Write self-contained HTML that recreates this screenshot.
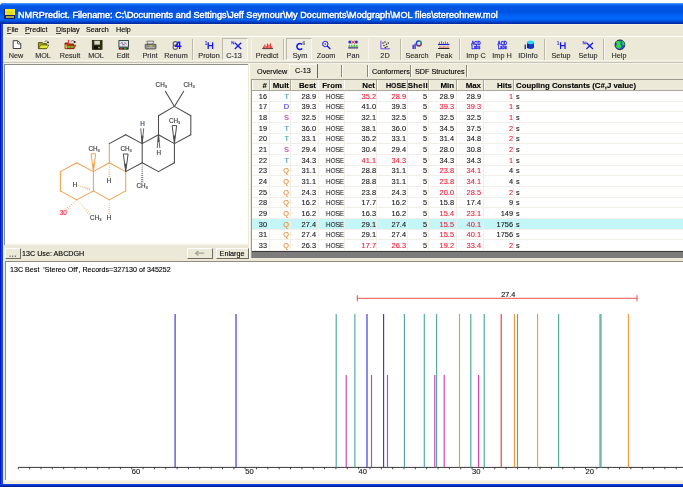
<!DOCTYPE html>
<html><head><meta charset="utf-8">
<style>
*{margin:0;padding:0;box-sizing:border-box}
html,body{width:683px;height:487px;overflow:hidden;background:#fff;font-family:"Liberation Sans",sans-serif}
.a{position:absolute}
.t{white-space:nowrap;line-height:1;will-change:transform;-webkit-text-stroke-width:0.12px}
svg{position:absolute;overflow:visible;will-change:transform}
u{text-decoration-thickness:0.6px;text-underline-offset:1px;text-decoration-color:#444}
</style></head><body>
<div class="a" style="left:0.00px;top:3.30px;width:700.00px;height:483.70px;background:#0B3FD6;border-top-left-radius:4px"></div>
<div class="a" style="left:0.00px;top:3.30px;width:700.00px;height:20.90px;border-top-left-radius:4px;background:linear-gradient(to bottom,#62AAFF 0px,#2A7BF8 1.0px,#0A60EC 2.2px,#0055E3 4px,#0053E0 9px,#005DEE 11.5px,#0067FA 14px,#0066F8 16px,#0052E0 18px,#0038B8 19.5px,#0026A0 20.9px)"></div>
<div class="a" style="left:0.00px;top:24.20px;width:2.80px;height:462.80px;background:linear-gradient(to right,#0010C4 0,#0414D0 0.9px,#1444E8 1.3px,#0A50E4 2.8px)"></div>
<div class="a" style="left:2.80px;top:24.20px;width:697.20px;height:460.00px;background:#ECE9D8"></div>
<div class="a" style="left:2.80px;top:24.20px;width:697.20px;height:0.80px;background:#F8F2E0"></div>
<div class="a" style="left:2.80px;top:24.20px;width:1.80px;height:460.00px;background:#F6EEDF"></div>
<div class="a" style="left:4.40px;top:9.20px;width:10.40px;height:10.10px;background:#14206A"></div>
<div class="a" style="left:4.50px;top:9.30px;width:10.20px;height:5.90px;background:#F2F020"></div>
<div class="a" style="left:6.00px;top:10.80px;width:7.20px;height:3.80px;background:#D8D030;opacity:.6"></div>
<div class="a" style="left:5.60px;top:16.00px;width:8.20px;height:2.40px;background:#D8D040;opacity:.75"></div>
<div class="a t" style="left:17.60px;top:11.21px;font-size:9.1px;color:#fff;-webkit-text-stroke-width:0.45px;letter-spacing:0.03px;text-shadow:0.7px 0.7px 0 #0A2A9A;">NMRPredict. Filename: C:\Documents and Settings\Jeff Seymour\My Documents\Modgraph\MOL files\stereohnew.mol</div>
<div class="a t" style="left:6.60px;top:26.23px;font-size:7.2px;color:#000;"><u>F</u>ile</div>
<div class="a t" style="left:25.40px;top:26.23px;font-size:7.2px;color:#000;"><u>P</u>redict</div>
<div class="a t" style="left:55.70px;top:26.23px;font-size:7.2px;color:#000;"><u>D</u>isplay</div>
<div class="a t" style="left:86.00px;top:26.23px;font-size:7.2px;color:#000;">Search</div>
<div class="a t" style="left:116.00px;top:26.23px;font-size:7.2px;color:#000;">Help</div>
<div class="a" style="left:2.80px;top:36.20px;width:697.20px;height:0.80px;background:#FFFFFF"></div>
<div class="a" style="left:2.80px;top:60.40px;width:697.20px;height:0.80px;background:#F5F3EA"></div>
<div class="a" style="left:2.80px;top:61.50px;width:697.20px;height:1.10px;background:#C9C5B5"></div>
<div class="a" style="left:2.80px;top:63.00px;width:697.20px;height:0.80px;background:#F4F2EA"></div>
<div class="a" style="left:192.00px;top:38.60px;width:0.80px;height:21.20px;background:#BDBAAB"></div>
<div class="a" style="left:192.80px;top:38.60px;width:0.60px;height:21.20px;background:#F6F5EE"></div>
<div class="a" style="left:250.60px;top:38.60px;width:0.80px;height:21.20px;background:#BDBAAB"></div>
<div class="a" style="left:251.40px;top:38.60px;width:0.60px;height:21.20px;background:#F6F5EE"></div>
<div class="a" style="left:283.30px;top:38.60px;width:0.80px;height:21.20px;background:#BDBAAB"></div>
<div class="a" style="left:284.10px;top:38.60px;width:0.60px;height:21.20px;background:#F6F5EE"></div>
<div class="a" style="left:367.50px;top:38.60px;width:0.80px;height:21.20px;background:#BDBAAB"></div>
<div class="a" style="left:368.30px;top:38.60px;width:0.60px;height:21.20px;background:#F6F5EE"></div>
<div class="a" style="left:400.40px;top:38.60px;width:0.80px;height:21.20px;background:#BDBAAB"></div>
<div class="a" style="left:401.20px;top:38.60px;width:0.60px;height:21.20px;background:#F6F5EE"></div>
<div class="a" style="left:459.40px;top:38.60px;width:0.80px;height:21.20px;background:#BDBAAB"></div>
<div class="a" style="left:460.20px;top:38.60px;width:0.60px;height:21.20px;background:#F6F5EE"></div>
<div class="a" style="left:544.20px;top:38.60px;width:0.80px;height:21.20px;background:#BDBAAB"></div>
<div class="a" style="left:545.00px;top:38.60px;width:0.60px;height:21.20px;background:#F6F5EE"></div>
<div class="a" style="left:603.40px;top:38.60px;width:0.80px;height:21.20px;background:#BDBAAB"></div>
<div class="a" style="left:604.20px;top:38.60px;width:0.60px;height:21.20px;background:#F6F5EE"></div>
<div class="a" style="left:222.30px;top:37.90px;width:25.80px;height:21.90px;background:#EFEDE2;border-left:1px solid #BDBAAA;border-top:1px solid #BDBAAA;border-right:0.8px solid #F8F7F2;border-bottom:0.8px solid #F8F7F2"></div>
<div class="a" style="left:286.30px;top:37.90px;width:25.50px;height:21.90px;background:#EFEDE2;border-left:1px solid #BDBAAA;border-top:1px solid #BDBAAA;border-right:0.8px solid #F8F7F2;border-bottom:0.8px solid #F8F7F2"></div>
<div class="a t" style="left:-3.65px;width:40px;text-align:center;top:52.21px;font-size:7.25px;color:#2a2a2a;">New</div>
<div class="a t" style="left:22.75px;width:40px;text-align:center;top:52.21px;font-size:7.25px;color:#2a2a2a;">MOL</div>
<div class="a t" style="left:50.05px;width:40px;text-align:center;top:52.21px;font-size:7.25px;color:#2a2a2a;">Result</div>
<div class="a t" style="left:76.00px;width:40px;text-align:center;top:52.21px;font-size:7.25px;color:#2a2a2a;">MOL</div>
<div class="a t" style="left:103.20px;width:40px;text-align:center;top:52.21px;font-size:7.25px;color:#2a2a2a;">Edit</div>
<div class="a t" style="left:130.25px;width:40px;text-align:center;top:52.21px;font-size:7.25px;color:#2a2a2a;">Print</div>
<div class="a t" style="left:156.10px;width:40px;text-align:center;top:52.21px;font-size:7.25px;color:#2a2a2a;">Renum</div>
<div class="a t" style="left:188.50px;width:40px;text-align:center;top:52.21px;font-size:7.25px;color:#2a2a2a;">Proton</div>
<div class="a t" style="left:213.95px;width:40px;text-align:center;top:52.21px;font-size:7.25px;color:#2a2a2a;">C-13</div>
<div class="a t" style="left:247.15px;width:40px;text-align:center;top:52.21px;font-size:7.25px;color:#2a2a2a;">Predict</div>
<div class="a t" style="left:280.10px;width:40px;text-align:center;top:52.21px;font-size:7.25px;color:#2a2a2a;">Sym</div>
<div class="a t" style="left:306.20px;width:40px;text-align:center;top:52.21px;font-size:7.25px;color:#2a2a2a;">Zoom</div>
<div class="a t" style="left:333.10px;width:40px;text-align:center;top:52.21px;font-size:7.25px;color:#2a2a2a;">Pan</div>
<div class="a t" style="left:364.85px;width:40px;text-align:center;top:52.21px;font-size:7.25px;color:#2a2a2a;">2D</div>
<div class="a t" style="left:396.50px;width:40px;text-align:center;top:52.21px;font-size:7.25px;color:#2a2a2a;">Search</div>
<div class="a t" style="left:423.50px;width:40px;text-align:center;top:52.21px;font-size:7.25px;color:#2a2a2a;">Peak</div>
<div class="a t" style="left:455.65px;width:40px;text-align:center;top:52.21px;font-size:7.25px;color:#2a2a2a;">Imp C</div>
<div class="a t" style="left:482.45px;width:40px;text-align:center;top:52.21px;font-size:7.25px;color:#2a2a2a;">Imp H</div>
<div class="a t" style="left:508.40px;width:40px;text-align:center;top:52.21px;font-size:7.25px;color:#2a2a2a;">IDInfo</div>
<div class="a t" style="left:540.90px;width:40px;text-align:center;top:52.21px;font-size:7.25px;color:#2a2a2a;">Setup</div>
<div class="a t" style="left:567.65px;width:40px;text-align:center;top:52.21px;font-size:7.25px;color:#2a2a2a;">Setup</div>
<div class="a t" style="left:599.25px;width:40px;text-align:center;top:52.21px;font-size:7.25px;color:#2a2a2a;">Help</div>
<svg width="683" height="70" viewBox="0 0 683 70" style="left:0;top:0">
<!-- New -->
<path d="M13.2 40.7 H17.8 L20.8 43.7 V48.5 H13.2 Z" fill="#fff" stroke="#2a2a2a" stroke-width="0.9"/>
<path d="M17.6 40.9 V43.9 H20.6" fill="none" stroke="#2a2a2a" stroke-width="0.7"/>
<!-- MOL open folder -->
<path d="M38.4 42.6 H42.5 L43.3 43.6 H46.5 V48.6 H38.4 Z" fill="#A8A818" stroke="#2a2a00" stroke-width="0.7"/>
<path d="M38.6 48.6 L40.6 45.0 H48.8 L46.6 48.6 Z" fill="#E8E840" stroke="#3a3a00" stroke-width="0.6"/>
<path d="M44.5 41.8 Q46 40 47.5 41.3" fill="none" stroke="#333" stroke-width="0.6"/>
<circle cx="48" cy="42.3" r="0.9" fill="#111"/>
<!-- Result folder -->
<path d="M65.0 43.0 H68.3 L69.1 43.9 H73.6 V48.6 H65.0 Z" fill="#D04010" stroke="#401000" stroke-width="0.7"/>
<path d="M65.2 48.6 L66.4 45.2 H75.8 L74.2 48.6 Z" fill="#F04818" stroke="#600" stroke-width="0.5"/>
<rect x="65.3" y="44.6" width="1.4" height="3.8" fill="#F0D030"/>
<circle cx="68.8" cy="46.9" r="1.2" fill="#30D840"/>
<circle cx="72.0" cy="46.9" r="1.2" fill="#30D840"/>
<path d="M68.4 39.8 V44.2" stroke="#F02020" stroke-width="1.0"/>
<path d="M70.8 41.6 Q72.4 39.9 74.0 41.0" fill="none" stroke="#333" stroke-width="0.6"/>
<circle cx="74.6" cy="41.9" r="1.0" fill="#111"/>
<!-- Save floppy -->
<rect x="92.2" y="40.3" width="9.9" height="9.2" fill="#303008" stroke="#151500" stroke-width="0.6"/>
<rect x="94.3" y="40.8" width="5.6" height="3.8" fill="#D8D8C8"/>
<rect x="94.0" y="45.8" width="6.2" height="3.4" fill="#101000"/>
<rect x="98.3" y="46.8" width="1.4" height="1.6" fill="#C8C8B8"/>
<!-- Edit monitor -->
<rect x="118.4" y="40.1" width="10.6" height="7.6" fill="#3A4A4A" rx="0.6"/>
<rect x="119.4" y="41.0" width="8.6" height="5.6" fill="#D8E8E8"/>
<path d="M120.5 43.5 L122.5 42.3 M124.5 42.0 L126.5 44.5 M122 45 L125 44" stroke="#D04080" stroke-width="0.8"/>
<path d="M121.5 42 L124 45.5" stroke="#30A0A0" stroke-width="0.8"/>
<rect x="118.8" y="47.7" width="9.8" height="1.9" fill="#202020"/>
<rect x="120.0" y="48.1" width="2.5" height="1.0" fill="#E03020"/>
<rect x="124.0" y="48.1" width="2.5" height="1.0" fill="#30B030"/>
<!-- Print -->
<path d="M146.8 41.2 H153.8 L152.8 44.0 H147.6 Z" fill="#E8E8E0" stroke="#505050" stroke-width="0.7"/>
<path d="M145.2 44.3 H156 V48.0 Q156 49 155 49 H146.2 Q145.2 49 145.2 48 Z" fill="#8A8A88" stroke="#404040" stroke-width="0.7"/>
<rect x="149.5" y="45.4" width="3" height="0.9" fill="#E0E020"/>
<rect x="146.5" y="47.3" width="8.2" height="0.8" fill="#C0C0C0"/>
<!-- Renum -->
<circle cx="175.3" cy="43.8" r="2.2" fill="none" stroke="#606060" stroke-width="1.1"/>
<circle cx="175.3" cy="47.2" r="2.2" fill="none" stroke="#606060" stroke-width="1.1"/>
<path d="M178.6 41.6 L175.8 46.3 H181.4 M179.6 41.6 V49" fill="none" stroke="#1A1AF0" stroke-width="1.5"/>
<!-- Proton 1H -->
<text x="204.8" y="44.6" font-size="4.6" font-weight="bold" fill="#1A1AE8" font-family="Liberation Sans">1</text>
<path d="M208.2 42.2 V49 M212.6 42.2 V49 M208.2 45.6 H212.6" stroke="#1A1AE8" stroke-width="1.3"/>
<!-- C13 NX -->
<path d="M231.8 44.3 V41.3 L233.8 44.3 V41.3" fill="none" stroke="#1A1AE8" stroke-width="0.7"/>
<path d="M234.8 42.8 L241.2 49 M241.2 42.8 L234.8 49" stroke="#1A1AE8" stroke-width="1.3"/>
<!-- Predict bars -->
<path d="M262.2 48.6 H273" stroke="#101010" stroke-width="0.8"/>
<path d="M263.4 48.3 V46.4 M264.8 48.3 V44.6 M266.2 48.3 V46.0 M267.6 48.3 V43.6 M269.0 48.3 V44.8 M270.4 48.3 V43.4 M271.8 48.3 V46.2" stroke="#E82020" stroke-width="1.0"/>
<!-- Sym C6 -->
<path d="M302.2 44.6 A3.0 3.0 0 1 0 302.2 48.4" fill="none" stroke="#1A1AE8" stroke-width="1.6"/>
<text x="302.6" y="45.2" font-size="4.8" font-weight="bold" fill="#505050" font-family="Liberation Sans">6</text>
<!-- Zoom -->
<circle cx="325.3" cy="44.0" r="2.7" fill="none" stroke="#1A1AE8" stroke-width="1.0"/>
<circle cx="325.3" cy="44.0" r="0.8" fill="#1A1AE8"/>
<path d="M327.2 45.9 L330.4 48.9" stroke="#1A1AE8" stroke-width="1.4"/>
<!-- Pan -->
<circle cx="349.8" cy="42.0" r="1.5" fill="#2030E0"/>
<circle cx="356.4" cy="42.0" r="1.5" fill="#2030E0"/>
<path d="M351.5 40.8 L354.8 43.6 M354.8 40.8 L351.5 43.6" stroke="#E02020" stroke-width="0.9"/>
<path d="M348.3 46.8 L349.3 44.3 L350.5 46.8 L351.8 44.5 L353 46.8 L354.3 44.3 L355.5 46.8 L356.8 44.5 L358 46.8 Z" fill="#30B830"/>
<rect x="348.1" y="47.4" width="10" height="1.0" fill="#101060"/>
<!-- 2D -->
<path d="M380.9 40.6 V48.8 H390" fill="none" stroke="#6A4AE8" stroke-width="1.0"/>
<g fill="#202020"><circle cx="383" cy="43" r="0.75"/><circle cx="385" cy="42" r="0.75"/><circle cx="386.5" cy="44.2" r="0.75"/><circle cx="384" cy="45.6" r="0.75"/><circle cx="387" cy="46.8" r="0.75"/><circle cx="385.3" cy="47.5" r="0.75"/><circle cx="388.3" cy="43" r="0.75"/></g>
<!-- Search -->
<rect x="412.5" y="44.8" width="1.3" height="4.2" fill="#2020D0"/>
<rect x="414.4" y="43.6" width="1.3" height="5.4" fill="#2020D0"/>
<circle cx="418.8" cy="43.4" r="2.4" fill="none" stroke="#2040E0" stroke-width="1.4"/>
<path d="M419.5 41.1 A2.4 2.4 0 0 1 421.2 43.3" fill="none" stroke="#20C040" stroke-width="1.4"/>
<path d="M420.8 44.6 A2.4 2.4 0 0 1 418.4 45.8" fill="none" stroke="#E02020" stroke-width="1.4"/>
<!-- Peak -->
<path d="M439.5 43.8 V41.8 M441.5 43.8 V41.2 M443.5 43.8 V42 M445.5 43.8 V41.5 M447.5 43.8 V42.2" stroke="#E02020" stroke-width="0.8"/>
<rect x="438" y="43.9" width="11.4" height="1.2" fill="#2020D0"/>
<path d="M440 48 V46.2 M442 48 V46.6 M444 48 V46 M446 48 V46.6 M448 48 V46.3" stroke="#E02020" stroke-width="0.8"/>
<rect x="438" y="48.1" width="11.4" height="0.9" fill="#101010"/>
<!-- Imp C / Imp H ACD Labs -->
<text x="471.2" y="44.6" font-size="4.6" font-weight="bold" fill="#2020F0" stroke="#2020F0" stroke-width="0.3" font-family="Liberation Sans" textLength="9.4" lengthAdjust="spacingAndGlyphs">ACD</text>
<text x="471.6" y="48.8" font-size="4.6" font-weight="bold" fill="#2020F0" stroke="#2020F0" stroke-width="0.3" font-family="Liberation Sans" textLength="8.8" lengthAdjust="spacingAndGlyphs">Labs</text>
<text x="497.6" y="44.6" font-size="4.6" font-weight="bold" fill="#2020F0" stroke="#2020F0" stroke-width="0.3" font-family="Liberation Sans" textLength="9.4" lengthAdjust="spacingAndGlyphs">ACD</text>
<text x="498.0" y="48.8" font-size="4.6" font-weight="bold" fill="#2020F0" stroke="#2020F0" stroke-width="0.3" font-family="Liberation Sans" textLength="8.8" lengthAdjust="spacingAndGlyphs">Labs</text>
<!-- IDInfo cylinder -->
<rect x="524.6" y="44.6" width="1.3" height="4.6" fill="#1A2A90"/>
<path d="M527 42.3 V48.0 Q530.5 50 534 48 V42.3 Z" fill="#1838C8"/>
<ellipse cx="530.5" cy="42.3" rx="3.5" ry="1.9" fill="#30D8F8"/>
<rect x="527.4" y="44" width="1.2" height="4" fill="#0A1A80"/>
<!-- Setup 1H -->
<text x="556.8" y="44.6" font-size="4.6" font-weight="bold" fill="#1A1AE8" font-family="Liberation Sans">1</text>
<path d="M560.6 42.2 V49 M565 42.2 V49 M560.6 45.6 H565" stroke="#1A1AE8" stroke-width="1.3"/>
<!-- Setup NX -->
<path d="M583.2 44.3 V41.3 L585.2 44.3 V41.3" fill="none" stroke="#1A1AE8" stroke-width="0.7"/>
<path d="M586.4 42.8 L593 49 M593 42.8 L586.4 49" stroke="#1A1AE8" stroke-width="1.3"/>
<!-- Help globe -->
<circle cx="619.9" cy="44.8" r="4.9" fill="#2850F0" stroke="#101010" stroke-width="0.8"/>
<path d="M615.6 41.8 Q618.5 40.2 621 41.6 L620 44 L621.6 45.6 L620 48.8 Q616.5 48.6 615.6 46.2 L617.2 44.5 Z" fill="#30E030"/>
<path d="M622 40.6 Q624.6 42 624.8 45.2 L622.6 45 Z" fill="#30E030"/>
</svg>
<div class="a" style="left:3.70px;top:64.20px;width:244.30px;height:180.80px;background:linear-gradient(to bottom,#fff 0,#fff 177.3px,#F6F4EC 179.8px,#ECE9D8 180.8px);border-left:1px solid #8E8C80;border-top:1px solid #8E8C80"></div>
<svg width="683" height="487" viewBox="0 0 683 487" style="left:0;top:0">
<path d="M76.70 162.70 L60.40 171.60" stroke="#F0A050" stroke-width="1.05" stroke-linecap="round"/>
<path d="M60.40 171.60 L60.40 190.90" stroke="#F0A050" stroke-width="1.05" stroke-linecap="round"/>
<path d="M60.40 190.90 L76.70 199.90" stroke="#F0A050" stroke-width="1.05" stroke-linecap="round"/>
<path d="M76.70 199.90 L93.40 190.90" stroke="#F0A050" stroke-width="1.05" stroke-linecap="round"/>
<path d="M93.40 190.90 L93.40 171.60" stroke="#F0A050" stroke-width="1.05" stroke-linecap="round"/>
<path d="M93.40 171.60 L76.70 162.70" stroke="#F0A050" stroke-width="1.05" stroke-linecap="round"/>
<path d="M93.40 171.60 L109.30 162.70" stroke="#F0A050" stroke-width="1.05" stroke-linecap="round"/>
<path d="M109.30 162.70 L125.70 171.60" stroke="#F0A050" stroke-width="1.05" stroke-linecap="round"/>
<path d="M125.70 171.60 L125.70 190.90" stroke="#F0A050" stroke-width="1.05" stroke-linecap="round"/>
<path d="M125.70 190.90 L109.30 199.90" stroke="#F0A050" stroke-width="1.05" stroke-linecap="round"/>
<path d="M109.30 199.90 L93.40 190.90" stroke="#F0A050" stroke-width="1.05" stroke-linecap="round"/>
<path d="M109.30 162.70 L109.30 143.60" stroke="#F0A050" stroke-width="1.05" stroke-linecap="round"/>
<path d="M109.30 143.60 L125.70 134.80" stroke="#4A4A4A" stroke-width="1.05" stroke-linecap="round"/>
<path d="M125.70 134.80 L142.20 143.60" stroke="#4A4A4A" stroke-width="1.05" stroke-linecap="round"/>
<path d="M142.20 143.60 L142.20 162.70" stroke="#4A4A4A" stroke-width="1.05" stroke-linecap="round"/>
<path d="M142.20 162.70 L125.70 171.60" stroke="#4A4A4A" stroke-width="1.05" stroke-linecap="round"/>
<path d="M142.20 143.60 L158.50 134.80" stroke="#4A4A4A" stroke-width="1.05" stroke-linecap="round"/>
<path d="M158.50 134.80 L174.40 143.60" stroke="#4A4A4A" stroke-width="1.05" stroke-linecap="round"/>
<path d="M174.40 143.60 L174.40 162.70" stroke="#4A4A4A" stroke-width="1.05" stroke-linecap="round"/>
<path d="M174.40 162.70 L158.50 171.60" stroke="#4A4A4A" stroke-width="1.05" stroke-linecap="round"/>
<path d="M158.50 171.60 L142.20 162.70" stroke="#4A4A4A" stroke-width="1.05" stroke-linecap="round"/>
<path d="M158.50 134.80 L158.50 115.80" stroke="#4A4A4A" stroke-width="1.05" stroke-linecap="round"/>
<path d="M158.50 115.80 L174.40 106.40" stroke="#4A4A4A" stroke-width="1.05" stroke-linecap="round"/>
<path d="M174.40 106.40 L190.80 115.80" stroke="#4A4A4A" stroke-width="1.05" stroke-linecap="round"/>
<path d="M190.80 115.80 L190.80 134.80" stroke="#4A4A4A" stroke-width="1.05" stroke-linecap="round"/>
<path d="M190.80 134.80 L174.40 143.60" stroke="#4A4A4A" stroke-width="1.05" stroke-linecap="round"/>
<path d="M174.40 106.40 L165.40 91.20" stroke="#4A4A4A" stroke-width="1.05" stroke-linecap="round"/>
<path d="M174.40 106.40 L183.70 91.20" stroke="#4A4A4A" stroke-width="1.05" stroke-linecap="round"/>
<path d="M93.40 171.60 L91.10 153.80 L95.70 153.80 Z" fill="#fff" stroke="#F0A050" stroke-width="1.0" stroke-linejoin="round"/>
<path d="M93.40 171.60 L92.37 163.59 L94.44 163.59 Z" fill="#F0A050"/>
<path d="M125.70 171.60 L123.30 154.00 L128.10 154.00 Z" fill="#fff" stroke="#4A4A4A" stroke-width="1.0" stroke-linejoin="round"/>
<path d="M125.70 171.60 L124.62 163.68 L126.78 163.68 Z" fill="#4A4A4A"/>
<path d="M174.40 143.60 L172.15 125.60 L176.65 125.60 Z" fill="#fff" stroke="#4A4A4A" stroke-width="1.0" stroke-linejoin="round"/>
<path d="M174.40 143.60 L173.39 135.50 L175.41 135.50 Z" fill="#4A4A4A"/>
<path d="M142.20 143.60 L140.70 128.30 M142.20 143.60 L143.70 128.30" fill="none" stroke="#4A4A4A" stroke-width="0.85"/>
<path d="M142.20 143.60 L141.45 135.95 L142.95 135.95 Z" fill="#4A4A4A" stroke="#4A4A4A" stroke-width="0.6"/>
<path d="M158.50 134.80 L157.20 148.00 M158.50 134.80 L159.80 148.00" fill="none" stroke="#4A4A4A" stroke-width="0.85"/>
<path d="M158.50 134.80 L157.85 141.40 L159.15 141.40 Z" fill="#4A4A4A" stroke="#4A4A4A" stroke-width="0.6"/>
<path d="M141.75 165.00 H142.65 M141.66 167.09 H142.74 M141.56 169.18 H142.84 M141.47 171.26 H142.93 M141.38 173.35 H143.02 M141.28 175.44 H143.12 M141.19 177.52 H143.21 M141.09 179.61 H143.31 M141.00 181.70 H143.40 " stroke="#4A4A4A" stroke-width="0.75"/>
<path d="M108.90 165.50 H109.70 M108.78 167.72 H109.82 M108.66 169.94 H109.94 M108.54 172.16 H110.06 M108.42 174.38 H110.18 M108.30 176.60 H110.30 " stroke="#F0A050" stroke-width="0.75"/>
<path d="M108.90 203.50 H109.70 M108.78 205.50 H109.82 M108.66 207.50 H109.94 M108.54 209.50 H110.06 M108.42 211.50 H110.18 M108.30 213.50 H110.30 " stroke="#F0A050" stroke-width="0.75"/>
<path d="M89.22 190.44 L89.98 187.96 M87.40 189.73 L88.07 187.53 M85.58 189.02 L86.16 187.11 M83.75 188.31 L84.25 186.69 M81.93 187.60 L82.34 186.26 M80.11 186.89 L80.43 185.84 M78.28 186.18 L78.52 185.42 " stroke="#F0A050" stroke-width="0.75"/>
<path d="M78.89 201.53 L78.31 202.07 M80.56 203.16 L79.78 203.87 M82.23 204.78 L81.26 205.67 M83.89 206.41 L82.74 207.47 M85.56 208.04 L84.21 209.27 M87.23 209.67 L85.69 211.08 M88.89 211.29 L87.17 212.88 M90.56 212.92 L88.64 214.68 " stroke="#F0A050" stroke-width="0.75"/>
<path d="M75.47 201.70 L74.93 201.10 M73.80 203.48 L73.00 202.60 M72.14 205.27 L71.06 204.09 M70.47 207.06 L69.13 205.58 M68.81 208.85 L67.19 207.07 M67.14 210.63 L65.26 208.57 " stroke="#F0A050" stroke-width="0.85"/>
<text x="155.60" y="87.00" font-size="6.3" fill="#3A3A3A" stroke="#3A3A3A" stroke-width="0.15" font-family="Liberation Sans">CH<tspan font-size="4.0" dy="1.1">3</tspan></text>
<text x="183.40" y="87.00" font-size="6.3" fill="#3A3A3A" stroke="#3A3A3A" stroke-width="0.15" font-family="Liberation Sans">CH<tspan font-size="4.0" dy="1.1">3</tspan></text>
<text x="169.00" y="122.80" font-size="6.3" fill="#3A3A3A" stroke="#3A3A3A" stroke-width="0.15" font-family="Liberation Sans">CH<tspan font-size="4.0" dy="1.1">3</tspan></text>
<text x="120.40" y="151.20" font-size="6.3" fill="#3A3A3A" stroke="#3A3A3A" stroke-width="0.15" font-family="Liberation Sans">CH<tspan font-size="4.0" dy="1.1">3</tspan></text>
<text x="88.40" y="151.20" font-size="6.3" fill="#3A3A3A" stroke="#3A3A3A" stroke-width="0.15" font-family="Liberation Sans">CH<tspan font-size="4.0" dy="1.1">3</tspan></text>
<text x="136.50" y="188.00" font-size="6.3" fill="#3A3A3A" stroke="#3A3A3A" stroke-width="0.15" font-family="Liberation Sans">CH<tspan font-size="4.0" dy="1.1">3</tspan></text>
<text x="90.10" y="220.20" font-size="6.3" fill="#3A3A3A" stroke="#3A3A3A" stroke-width="0.15" font-family="Liberation Sans">CH<tspan font-size="4.0" dy="1.1">3</tspan></text>
<text x="140.20" y="126.10" font-size="6.3" fill="#3A4A6A" stroke="#3A4A6A" stroke-width="0.18" font-family="Liberation Sans">H</text>
<text x="156.60" y="154.80" font-size="6.3" fill="#3A3A3A" stroke="#3A3A3A" stroke-width="0.18" font-family="Liberation Sans">H</text>
<text x="106.80" y="183.00" font-size="6.3" fill="#3A3A3A" stroke="#3A3A3A" stroke-width="0.18" font-family="Liberation Sans">H</text>
<text x="72.80" y="187.00" font-size="6.3" fill="#3A3A3A" stroke="#3A3A3A" stroke-width="0.18" font-family="Liberation Sans">H</text>
<text x="106.80" y="220.40" font-size="6.3" fill="#3A3A3A" stroke="#3A3A3A" stroke-width="0.18" font-family="Liberation Sans">H</text>
<text x="59.80" y="215.40" font-size="6.4" fill="#F03048" stroke="#F03048" stroke-width="0.18" font-family="Liberation Sans">30</text>
</svg>
<div class="a" style="left:5.00px;top:248.30px;width:15.70px;height:10.40px;background:#ECE9D8;border-left:0.8px solid #fff;border-top:0.8px solid #fff;border-right:1px solid #6E6C60;border-bottom:1px solid #6E6C60"></div>
<svg width="683" height="487" viewBox="0 0 683 487" style="left:0;top:0"><path d="M9.6 256.2 h1 M12.2 256.2 h1 M14.8 256.2 h1" stroke="#202020" stroke-width="1"/></svg>
<div class="a t" style="left:22.00px;top:250.33px;font-size:7.2px;color:#000;">13C Use: ABCDGH</div>
<div class="a" style="left:187.30px;top:247.80px;width:25.40px;height:10.80px;background:#ECE9D8;border-left:0.8px solid #fff;border-top:0.8px solid #fff;border-right:1px solid #6E6C60;border-bottom:1px solid #6E6C60"></div>
<div class="a" style="left:215.90px;top:247.80px;width:33.00px;height:10.80px;background:#ECE9D8;border-left:0.8px solid #fff;border-top:0.8px solid #fff;border-right:1px solid #6E6C60;border-bottom:1px solid #6E6C60"></div>
<svg width="683" height="487" viewBox="0 0 683 487" style="left:0;top:0"><path d="M195.6 253.2 H204.2 M198.4 250.9 L195.6 253.2 L198.4 255.5" fill="none" stroke="#A6A496" stroke-width="1.3"/></svg>
<div class="a t" style="left:212.40px;width:40px;text-align:center;top:249.93px;font-size:7.2px;color:#000;">Enlarge</div>
<div class="a" style="left:248.60px;top:63.80px;width:451.40px;height:15.40px;background:#ECE9D8"></div>
<div class="a" style="left:248.60px;top:63.50px;width:0.80px;height:195.00px;background:#FFFFFF"></div>
<div class="a" style="left:289.00px;top:63.60px;width:28.60px;height:14.90px;background:#EEEBDD;border-left:0.6px solid #F8F6F0;border-top:0.6px solid #F8F6F0"></div>
<div class="a" style="left:317.00px;top:63.50px;width:0.90px;height:14.00px;background:#6A685C"></div>
<div class="a" style="left:341.40px;top:64.50px;width:0.90px;height:12.50px;background:#8A887C"></div>
<div class="a" style="left:342.30px;top:64.50px;width:0.60px;height:12.50px;background:#FFFFFF"></div>
<div class="a" style="left:366.60px;top:64.50px;width:0.90px;height:12.50px;background:#8A887C"></div>
<div class="a" style="left:367.50px;top:64.50px;width:0.60px;height:12.50px;background:#FFFFFF"></div>
<div class="a" style="left:409.60px;top:64.50px;width:0.90px;height:12.50px;background:#8A887C"></div>
<div class="a" style="left:410.50px;top:64.50px;width:0.60px;height:12.50px;background:#FFFFFF"></div>
<div class="a" style="left:466.40px;top:64.50px;width:0.90px;height:12.50px;background:#8A887C"></div>
<div class="a" style="left:467.30px;top:64.50px;width:0.60px;height:12.50px;background:#FFFFFF"></div>
<div class="a t" style="left:256.70px;top:68.11px;font-size:7.25px;color:#000;">Overview</div>
<div class="a t" style="left:294.70px;top:67.01px;font-size:7.25px;color:#000;">C-13</div>
<div class="a t" style="left:371.80px;top:68.11px;font-size:7.25px;color:#000;">Conformers</div>
<div class="a t" style="left:415.40px;top:68.11px;font-size:7.25px;color:#000;">SDF Structures</div>
<div class="a" style="left:251.70px;top:79.60px;width:448.30px;height:171.40px;background:#fff"></div>
<div class="a" style="left:250.90px;top:79.10px;width:0.90px;height:178.90px;background:#9C9A8E"></div>
<div class="a" style="left:250.90px;top:79.00px;width:449.10px;height:0.80px;background:#9C9A8E"></div>
<div class="a" style="left:251.70px;top:79.60px;width:448.30px;height:11.10px;background:#ECE9D8"></div>
<div class="a" style="left:268.70px;top:79.60px;width:0.90px;height:11.10px;background:#A9A698"></div>
<div class="a" style="left:251.80px;top:79.60px;width:0.70px;height:11.10px;background:#FFFFFF"></div>
<div class="a" style="left:290.20px;top:79.60px;width:0.90px;height:11.10px;background:#A9A698"></div>
<div class="a" style="left:269.60px;top:79.60px;width:0.70px;height:11.10px;background:#FFFFFF"></div>
<div class="a" style="left:317.50px;top:79.60px;width:0.90px;height:11.10px;background:#A9A698"></div>
<div class="a" style="left:291.10px;top:79.60px;width:0.70px;height:11.10px;background:#FFFFFF"></div>
<div class="a" style="left:343.50px;top:79.60px;width:0.90px;height:11.10px;background:#A9A698"></div>
<div class="a" style="left:318.40px;top:79.60px;width:0.70px;height:11.10px;background:#FFFFFF"></div>
<div class="a" style="left:376.20px;top:79.60px;width:0.90px;height:11.10px;background:#A9A698"></div>
<div class="a" style="left:344.40px;top:79.60px;width:0.70px;height:11.10px;background:#FFFFFF"></div>
<div class="a" style="left:406.70px;top:79.60px;width:0.90px;height:11.10px;background:#A9A698"></div>
<div class="a" style="left:377.10px;top:79.60px;width:0.70px;height:11.10px;background:#FFFFFF"></div>
<div class="a" style="left:428.20px;top:79.60px;width:0.90px;height:11.10px;background:#A9A698"></div>
<div class="a" style="left:407.60px;top:79.60px;width:0.70px;height:11.10px;background:#FFFFFF"></div>
<div class="a" style="left:455.90px;top:79.60px;width:0.90px;height:11.10px;background:#A9A698"></div>
<div class="a" style="left:429.10px;top:79.60px;width:0.70px;height:11.10px;background:#FFFFFF"></div>
<div class="a" style="left:482.80px;top:79.60px;width:0.90px;height:11.10px;background:#A9A698"></div>
<div class="a" style="left:456.80px;top:79.60px;width:0.70px;height:11.10px;background:#FFFFFF"></div>
<div class="a" style="left:513.30px;top:79.60px;width:0.90px;height:11.10px;background:#A9A698"></div>
<div class="a" style="left:483.70px;top:79.60px;width:0.70px;height:11.10px;background:#FFFFFF"></div>
<div class="a" style="left:699.20px;top:79.60px;width:0.90px;height:11.10px;background:#A9A698"></div>
<div class="a" style="left:514.20px;top:79.60px;width:0.70px;height:11.10px;background:#FFFFFF"></div>
<div class="a" style="left:251.70px;top:89.90px;width:448.30px;height:0.90px;background:#A9A698"></div>
<div class="a t" style="left:227.20px;width:40px;text-align:right;top:82.19px;font-size:7.9px;color:#000;font-weight:bold;">#</div>
<div class="a t" style="left:248.70px;width:40px;text-align:right;top:82.19px;font-size:7.9px;color:#000;font-weight:bold;">Mult</div>
<div class="a t" style="left:276.00px;width:40px;text-align:right;top:82.19px;font-size:7.9px;color:#000;font-weight:bold;">Best</div>
<div class="a t" style="left:302.00px;width:40px;text-align:right;top:82.19px;font-size:7.9px;color:#000;font-weight:bold;">From</div>
<div class="a t" style="left:334.70px;width:40px;text-align:right;top:82.19px;font-size:7.9px;color:#000;font-weight:bold;">Net</div>
<div class="a t" style="left:366.10px;width:40px;text-align:right;top:82.19px;font-size:7.9px;color:#000;font-weight:bold;transform:scaleX(0.9);transform-origin:100% 50%;">HOSE</div>
<div class="a t" style="left:388.40px;width:40px;text-align:right;top:82.19px;font-size:7.9px;color:#000;font-weight:bold;letter-spacing:0.3px;">Shell</div>
<div class="a t" style="left:414.40px;width:40px;text-align:right;top:82.19px;font-size:7.9px;color:#000;font-weight:bold;">Min</div>
<div class="a t" style="left:441.30px;width:40px;text-align:right;top:82.19px;font-size:7.9px;color:#000;font-weight:bold;">Max</div>
<div class="a t" style="left:471.80px;width:40px;text-align:right;top:82.19px;font-size:7.9px;color:#000;font-weight:bold;">Hits</div>
<div class="a t" style="left:516.40px;top:82.24px;font-size:7.8px;color:#000;font-weight:bold;">Coupling Constants (C#,J value)</div>
<div class="a" style="left:251.70px;top:100.57px;width:448.30px;height:0.80px;background:#F1EFE7"></div>
<div class="a t" style="left:227.20px;width:40px;text-align:right;top:92.67px;font-size:7.4px;color:#1A1A1A;">16</div>
<div class="a t" style="left:248.70px;width:40px;text-align:right;top:92.67px;font-size:7.4px;color:#3A9E9C;">T</div>
<div class="a t" style="left:276.00px;width:40px;text-align:right;top:92.67px;font-size:7.4px;color:#1A1A1A;">28.9</div>
<div class="a t" style="left:303.50px;width:40px;text-align:right;top:92.67px;font-size:7.4px;color:#1A1A1A;transform:scaleX(0.87);transform-origin:100% 50%;">HOSE</div>
<div class="a t" style="left:335.60px;width:40px;text-align:right;top:92.67px;font-size:7.4px;color:#F0203A;">35.2</div>
<div class="a t" style="left:366.20px;width:40px;text-align:right;top:92.67px;font-size:7.4px;color:#F0203A;">28.9</div>
<div class="a t" style="left:386.70px;width:40px;text-align:right;top:92.67px;font-size:7.4px;color:#1A1A1A;">5</div>
<div class="a t" style="left:414.40px;width:40px;text-align:right;top:92.67px;font-size:7.4px;color:#1A1A1A;">28.9</div>
<div class="a t" style="left:441.30px;width:40px;text-align:right;top:92.67px;font-size:7.4px;color:#1A1A1A;">28.9</div>
<div class="a t" style="left:472.80px;width:40px;text-align:right;top:92.67px;font-size:7.4px;color:#F0203A;">1</div>
<div class="a t" style="left:516.40px;top:92.74px;font-size:7.25px;color:#1A1A1A;">s</div>
<div class="a" style="left:251.70px;top:111.23px;width:448.30px;height:0.80px;background:#F1EFE7"></div>
<div class="a t" style="left:227.20px;width:40px;text-align:right;top:103.33px;font-size:7.4px;color:#1A1A1A;">17</div>
<div class="a t" style="left:248.70px;width:40px;text-align:right;top:103.33px;font-size:7.4px;color:#3A3AE0;">D</div>
<div class="a t" style="left:276.00px;width:40px;text-align:right;top:103.33px;font-size:7.4px;color:#1A1A1A;">39.3</div>
<div class="a t" style="left:303.50px;width:40px;text-align:right;top:103.33px;font-size:7.4px;color:#1A1A1A;transform:scaleX(0.87);transform-origin:100% 50%;">HOSE</div>
<div class="a t" style="left:335.60px;width:40px;text-align:right;top:103.33px;font-size:7.4px;color:#1A1A1A;">41.0</div>
<div class="a t" style="left:366.20px;width:40px;text-align:right;top:103.33px;font-size:7.4px;color:#1A1A1A;">39.3</div>
<div class="a t" style="left:386.70px;width:40px;text-align:right;top:103.33px;font-size:7.4px;color:#1A1A1A;">5</div>
<div class="a t" style="left:414.40px;width:40px;text-align:right;top:103.33px;font-size:7.4px;color:#F0203A;">39.3</div>
<div class="a t" style="left:441.30px;width:40px;text-align:right;top:103.33px;font-size:7.4px;color:#F0203A;">39.3</div>
<div class="a t" style="left:472.80px;width:40px;text-align:right;top:103.33px;font-size:7.4px;color:#F0203A;">1</div>
<div class="a t" style="left:516.40px;top:103.41px;font-size:7.25px;color:#1A1A1A;">s</div>
<div class="a" style="left:251.70px;top:121.90px;width:448.30px;height:0.80px;background:#F1EFE7"></div>
<div class="a t" style="left:227.20px;width:40px;text-align:right;top:114.00px;font-size:7.4px;color:#1A1A1A;">18</div>
<div class="a t" style="left:248.70px;width:40px;text-align:right;top:114.00px;font-size:7.4px;color:#C83A9E;">S</div>
<div class="a t" style="left:276.00px;width:40px;text-align:right;top:114.00px;font-size:7.4px;color:#1A1A1A;">32.5</div>
<div class="a t" style="left:303.50px;width:40px;text-align:right;top:114.00px;font-size:7.4px;color:#1A1A1A;transform:scaleX(0.87);transform-origin:100% 50%;">HOSE</div>
<div class="a t" style="left:335.60px;width:40px;text-align:right;top:114.00px;font-size:7.4px;color:#1A1A1A;">32.1</div>
<div class="a t" style="left:366.20px;width:40px;text-align:right;top:114.00px;font-size:7.4px;color:#1A1A1A;">32.5</div>
<div class="a t" style="left:386.70px;width:40px;text-align:right;top:114.00px;font-size:7.4px;color:#1A1A1A;">5</div>
<div class="a t" style="left:414.40px;width:40px;text-align:right;top:114.00px;font-size:7.4px;color:#1A1A1A;">32.5</div>
<div class="a t" style="left:441.30px;width:40px;text-align:right;top:114.00px;font-size:7.4px;color:#1A1A1A;">32.5</div>
<div class="a t" style="left:472.80px;width:40px;text-align:right;top:114.00px;font-size:7.4px;color:#F0203A;">1</div>
<div class="a t" style="left:516.40px;top:114.07px;font-size:7.25px;color:#1A1A1A;">s</div>
<div class="a" style="left:251.70px;top:132.57px;width:448.30px;height:0.80px;background:#F1EFE7"></div>
<div class="a t" style="left:227.20px;width:40px;text-align:right;top:124.67px;font-size:7.4px;color:#1A1A1A;">19</div>
<div class="a t" style="left:248.70px;width:40px;text-align:right;top:124.67px;font-size:7.4px;color:#3A9E9C;">T</div>
<div class="a t" style="left:276.00px;width:40px;text-align:right;top:124.67px;font-size:7.4px;color:#1A1A1A;">36.0</div>
<div class="a t" style="left:303.50px;width:40px;text-align:right;top:124.67px;font-size:7.4px;color:#1A1A1A;transform:scaleX(0.87);transform-origin:100% 50%;">HOSE</div>
<div class="a t" style="left:335.60px;width:40px;text-align:right;top:124.67px;font-size:7.4px;color:#1A1A1A;">38.1</div>
<div class="a t" style="left:366.20px;width:40px;text-align:right;top:124.67px;font-size:7.4px;color:#1A1A1A;">36.0</div>
<div class="a t" style="left:386.70px;width:40px;text-align:right;top:124.67px;font-size:7.4px;color:#1A1A1A;">5</div>
<div class="a t" style="left:414.40px;width:40px;text-align:right;top:124.67px;font-size:7.4px;color:#1A1A1A;">34.5</div>
<div class="a t" style="left:441.30px;width:40px;text-align:right;top:124.67px;font-size:7.4px;color:#1A1A1A;">37.5</div>
<div class="a t" style="left:472.80px;width:40px;text-align:right;top:124.67px;font-size:7.4px;color:#F0203A;">2</div>
<div class="a t" style="left:516.40px;top:124.74px;font-size:7.25px;color:#1A1A1A;">s</div>
<div class="a" style="left:251.70px;top:143.23px;width:448.30px;height:0.80px;background:#F1EFE7"></div>
<div class="a t" style="left:227.20px;width:40px;text-align:right;top:135.33px;font-size:7.4px;color:#1A1A1A;">20</div>
<div class="a t" style="left:248.70px;width:40px;text-align:right;top:135.33px;font-size:7.4px;color:#3A9E9C;">T</div>
<div class="a t" style="left:276.00px;width:40px;text-align:right;top:135.33px;font-size:7.4px;color:#1A1A1A;">33.1</div>
<div class="a t" style="left:303.50px;width:40px;text-align:right;top:135.33px;font-size:7.4px;color:#1A1A1A;transform:scaleX(0.87);transform-origin:100% 50%;">HOSE</div>
<div class="a t" style="left:335.60px;width:40px;text-align:right;top:135.33px;font-size:7.4px;color:#1A1A1A;">35.2</div>
<div class="a t" style="left:366.20px;width:40px;text-align:right;top:135.33px;font-size:7.4px;color:#1A1A1A;">33.1</div>
<div class="a t" style="left:386.70px;width:40px;text-align:right;top:135.33px;font-size:7.4px;color:#1A1A1A;">5</div>
<div class="a t" style="left:414.40px;width:40px;text-align:right;top:135.33px;font-size:7.4px;color:#1A1A1A;">31.4</div>
<div class="a t" style="left:441.30px;width:40px;text-align:right;top:135.33px;font-size:7.4px;color:#1A1A1A;">34.8</div>
<div class="a t" style="left:472.80px;width:40px;text-align:right;top:135.33px;font-size:7.4px;color:#F0203A;">2</div>
<div class="a t" style="left:516.40px;top:135.41px;font-size:7.25px;color:#1A1A1A;">s</div>
<div class="a" style="left:251.70px;top:153.90px;width:448.30px;height:0.80px;background:#F1EFE7"></div>
<div class="a t" style="left:227.20px;width:40px;text-align:right;top:146.00px;font-size:7.4px;color:#1A1A1A;">21</div>
<div class="a t" style="left:248.70px;width:40px;text-align:right;top:146.00px;font-size:7.4px;color:#C83A9E;">S</div>
<div class="a t" style="left:276.00px;width:40px;text-align:right;top:146.00px;font-size:7.4px;color:#1A1A1A;">29.4</div>
<div class="a t" style="left:303.50px;width:40px;text-align:right;top:146.00px;font-size:7.4px;color:#1A1A1A;transform:scaleX(0.87);transform-origin:100% 50%;">HOSE</div>
<div class="a t" style="left:335.60px;width:40px;text-align:right;top:146.00px;font-size:7.4px;color:#1A1A1A;">30.4</div>
<div class="a t" style="left:366.20px;width:40px;text-align:right;top:146.00px;font-size:7.4px;color:#1A1A1A;">29.4</div>
<div class="a t" style="left:386.70px;width:40px;text-align:right;top:146.00px;font-size:7.4px;color:#1A1A1A;">5</div>
<div class="a t" style="left:414.40px;width:40px;text-align:right;top:146.00px;font-size:7.4px;color:#1A1A1A;">28.0</div>
<div class="a t" style="left:441.30px;width:40px;text-align:right;top:146.00px;font-size:7.4px;color:#1A1A1A;">30.8</div>
<div class="a t" style="left:472.80px;width:40px;text-align:right;top:146.00px;font-size:7.4px;color:#F0203A;">2</div>
<div class="a t" style="left:516.40px;top:146.07px;font-size:7.25px;color:#1A1A1A;">s</div>
<div class="a" style="left:251.70px;top:164.57px;width:448.30px;height:0.80px;background:#F1EFE7"></div>
<div class="a t" style="left:227.20px;width:40px;text-align:right;top:156.67px;font-size:7.4px;color:#1A1A1A;">22</div>
<div class="a t" style="left:248.70px;width:40px;text-align:right;top:156.67px;font-size:7.4px;color:#3A9E9C;">T</div>
<div class="a t" style="left:276.00px;width:40px;text-align:right;top:156.67px;font-size:7.4px;color:#1A1A1A;">34.3</div>
<div class="a t" style="left:303.50px;width:40px;text-align:right;top:156.67px;font-size:7.4px;color:#1A1A1A;transform:scaleX(0.87);transform-origin:100% 50%;">HOSE</div>
<div class="a t" style="left:335.60px;width:40px;text-align:right;top:156.67px;font-size:7.4px;color:#F0203A;">41.1</div>
<div class="a t" style="left:366.20px;width:40px;text-align:right;top:156.67px;font-size:7.4px;color:#F0203A;">34.3</div>
<div class="a t" style="left:386.70px;width:40px;text-align:right;top:156.67px;font-size:7.4px;color:#1A1A1A;">5</div>
<div class="a t" style="left:414.40px;width:40px;text-align:right;top:156.67px;font-size:7.4px;color:#1A1A1A;">34.3</div>
<div class="a t" style="left:441.30px;width:40px;text-align:right;top:156.67px;font-size:7.4px;color:#1A1A1A;">34.3</div>
<div class="a t" style="left:472.80px;width:40px;text-align:right;top:156.67px;font-size:7.4px;color:#F0203A;">1</div>
<div class="a t" style="left:516.40px;top:156.74px;font-size:7.25px;color:#1A1A1A;">s</div>
<div class="a" style="left:251.70px;top:175.24px;width:448.30px;height:0.80px;background:#F1EFE7"></div>
<div class="a t" style="left:227.20px;width:40px;text-align:right;top:167.34px;font-size:7.4px;color:#1A1A1A;">23</div>
<div class="a t" style="left:248.70px;width:40px;text-align:right;top:167.34px;font-size:7.4px;color:#F08A2A;">Q</div>
<div class="a t" style="left:276.00px;width:40px;text-align:right;top:167.34px;font-size:7.4px;color:#1A1A1A;">31.1</div>
<div class="a t" style="left:303.50px;width:40px;text-align:right;top:167.34px;font-size:7.4px;color:#1A1A1A;transform:scaleX(0.87);transform-origin:100% 50%;">HOSE</div>
<div class="a t" style="left:335.60px;width:40px;text-align:right;top:167.34px;font-size:7.4px;color:#1A1A1A;">28.8</div>
<div class="a t" style="left:366.20px;width:40px;text-align:right;top:167.34px;font-size:7.4px;color:#1A1A1A;">31.1</div>
<div class="a t" style="left:386.70px;width:40px;text-align:right;top:167.34px;font-size:7.4px;color:#1A1A1A;">5</div>
<div class="a t" style="left:414.40px;width:40px;text-align:right;top:167.34px;font-size:7.4px;color:#F0203A;">23.8</div>
<div class="a t" style="left:441.30px;width:40px;text-align:right;top:167.34px;font-size:7.4px;color:#F0203A;">34.1</div>
<div class="a t" style="left:472.80px;width:40px;text-align:right;top:167.34px;font-size:7.4px;color:#1A1A1A;">4</div>
<div class="a t" style="left:516.40px;top:167.41px;font-size:7.25px;color:#1A1A1A;">s</div>
<div class="a" style="left:251.70px;top:185.90px;width:448.30px;height:0.80px;background:#F1EFE7"></div>
<div class="a t" style="left:227.20px;width:40px;text-align:right;top:178.00px;font-size:7.4px;color:#1A1A1A;">24</div>
<div class="a t" style="left:248.70px;width:40px;text-align:right;top:178.00px;font-size:7.4px;color:#F08A2A;">Q</div>
<div class="a t" style="left:276.00px;width:40px;text-align:right;top:178.00px;font-size:7.4px;color:#1A1A1A;">31.1</div>
<div class="a t" style="left:303.50px;width:40px;text-align:right;top:178.00px;font-size:7.4px;color:#1A1A1A;transform:scaleX(0.87);transform-origin:100% 50%;">HOSE</div>
<div class="a t" style="left:335.60px;width:40px;text-align:right;top:178.00px;font-size:7.4px;color:#1A1A1A;">28.8</div>
<div class="a t" style="left:366.20px;width:40px;text-align:right;top:178.00px;font-size:7.4px;color:#1A1A1A;">31.1</div>
<div class="a t" style="left:386.70px;width:40px;text-align:right;top:178.00px;font-size:7.4px;color:#1A1A1A;">5</div>
<div class="a t" style="left:414.40px;width:40px;text-align:right;top:178.00px;font-size:7.4px;color:#F0203A;">23.8</div>
<div class="a t" style="left:441.30px;width:40px;text-align:right;top:178.00px;font-size:7.4px;color:#F0203A;">34.1</div>
<div class="a t" style="left:472.80px;width:40px;text-align:right;top:178.00px;font-size:7.4px;color:#1A1A1A;">4</div>
<div class="a t" style="left:516.40px;top:178.08px;font-size:7.25px;color:#1A1A1A;">s</div>
<div class="a" style="left:251.70px;top:196.57px;width:448.30px;height:0.80px;background:#F1EFE7"></div>
<div class="a t" style="left:227.20px;width:40px;text-align:right;top:188.67px;font-size:7.4px;color:#1A1A1A;">25</div>
<div class="a t" style="left:248.70px;width:40px;text-align:right;top:188.67px;font-size:7.4px;color:#F08A2A;">Q</div>
<div class="a t" style="left:276.00px;width:40px;text-align:right;top:188.67px;font-size:7.4px;color:#1A1A1A;">24.3</div>
<div class="a t" style="left:303.50px;width:40px;text-align:right;top:188.67px;font-size:7.4px;color:#1A1A1A;transform:scaleX(0.87);transform-origin:100% 50%;">HOSE</div>
<div class="a t" style="left:335.60px;width:40px;text-align:right;top:188.67px;font-size:7.4px;color:#1A1A1A;">23.8</div>
<div class="a t" style="left:366.20px;width:40px;text-align:right;top:188.67px;font-size:7.4px;color:#1A1A1A;">24.3</div>
<div class="a t" style="left:386.70px;width:40px;text-align:right;top:188.67px;font-size:7.4px;color:#1A1A1A;">5</div>
<div class="a t" style="left:414.40px;width:40px;text-align:right;top:188.67px;font-size:7.4px;color:#F0203A;">20.0</div>
<div class="a t" style="left:441.30px;width:40px;text-align:right;top:188.67px;font-size:7.4px;color:#F0203A;">28.5</div>
<div class="a t" style="left:472.80px;width:40px;text-align:right;top:188.67px;font-size:7.4px;color:#F0203A;">2</div>
<div class="a t" style="left:516.40px;top:188.74px;font-size:7.25px;color:#1A1A1A;">s</div>
<div class="a" style="left:251.70px;top:207.24px;width:448.30px;height:0.80px;background:#F1EFE7"></div>
<div class="a t" style="left:227.20px;width:40px;text-align:right;top:199.34px;font-size:7.4px;color:#1A1A1A;">28</div>
<div class="a t" style="left:248.70px;width:40px;text-align:right;top:199.34px;font-size:7.4px;color:#F08A2A;">Q</div>
<div class="a t" style="left:276.00px;width:40px;text-align:right;top:199.34px;font-size:7.4px;color:#1A1A1A;">16.2</div>
<div class="a t" style="left:303.50px;width:40px;text-align:right;top:199.34px;font-size:7.4px;color:#1A1A1A;transform:scaleX(0.87);transform-origin:100% 50%;">HOSE</div>
<div class="a t" style="left:335.60px;width:40px;text-align:right;top:199.34px;font-size:7.4px;color:#1A1A1A;">17.7</div>
<div class="a t" style="left:366.20px;width:40px;text-align:right;top:199.34px;font-size:7.4px;color:#1A1A1A;">16.2</div>
<div class="a t" style="left:386.70px;width:40px;text-align:right;top:199.34px;font-size:7.4px;color:#1A1A1A;">5</div>
<div class="a t" style="left:414.40px;width:40px;text-align:right;top:199.34px;font-size:7.4px;color:#1A1A1A;">15.8</div>
<div class="a t" style="left:441.30px;width:40px;text-align:right;top:199.34px;font-size:7.4px;color:#1A1A1A;">17.4</div>
<div class="a t" style="left:472.80px;width:40px;text-align:right;top:199.34px;font-size:7.4px;color:#1A1A1A;">9</div>
<div class="a t" style="left:516.40px;top:199.41px;font-size:7.25px;color:#1A1A1A;">s</div>
<div class="a" style="left:251.70px;top:217.90px;width:448.30px;height:0.80px;background:#F1EFE7"></div>
<div class="a t" style="left:227.20px;width:40px;text-align:right;top:210.00px;font-size:7.4px;color:#1A1A1A;">29</div>
<div class="a t" style="left:248.70px;width:40px;text-align:right;top:210.00px;font-size:7.4px;color:#F08A2A;">Q</div>
<div class="a t" style="left:276.00px;width:40px;text-align:right;top:210.00px;font-size:7.4px;color:#1A1A1A;">16.2</div>
<div class="a t" style="left:303.50px;width:40px;text-align:right;top:210.00px;font-size:7.4px;color:#1A1A1A;transform:scaleX(0.87);transform-origin:100% 50%;">HOSE</div>
<div class="a t" style="left:335.60px;width:40px;text-align:right;top:210.00px;font-size:7.4px;color:#1A1A1A;">16.3</div>
<div class="a t" style="left:366.20px;width:40px;text-align:right;top:210.00px;font-size:7.4px;color:#1A1A1A;">16.2</div>
<div class="a t" style="left:386.70px;width:40px;text-align:right;top:210.00px;font-size:7.4px;color:#1A1A1A;">5</div>
<div class="a t" style="left:414.40px;width:40px;text-align:right;top:210.00px;font-size:7.4px;color:#F0203A;">15.4</div>
<div class="a t" style="left:441.30px;width:40px;text-align:right;top:210.00px;font-size:7.4px;color:#F0203A;">23.1</div>
<div class="a t" style="left:472.80px;width:40px;text-align:right;top:210.00px;font-size:7.4px;color:#1A1A1A;">149</div>
<div class="a t" style="left:516.40px;top:210.08px;font-size:7.25px;color:#1A1A1A;">s</div>
<div class="a" style="left:251.70px;top:218.70px;width:448.30px;height:10.67px;background:#C4F6F8"></div>
<div class="a" style="left:251.70px;top:228.57px;width:448.30px;height:0.80px;background:#F1EFE7"></div>
<div class="a t" style="left:227.20px;width:40px;text-align:right;top:220.67px;font-size:7.4px;color:#1A1A1A;">30</div>
<div class="a t" style="left:248.70px;width:40px;text-align:right;top:220.67px;font-size:7.4px;color:#F08A2A;">Q</div>
<div class="a t" style="left:276.00px;width:40px;text-align:right;top:220.67px;font-size:7.4px;color:#1A1A1A;">27.4</div>
<div class="a t" style="left:303.50px;width:40px;text-align:right;top:220.67px;font-size:7.4px;color:#1A1A1A;transform:scaleX(0.87);transform-origin:100% 50%;">HOSE</div>
<div class="a t" style="left:335.60px;width:40px;text-align:right;top:220.67px;font-size:7.4px;color:#1A1A1A;">29.1</div>
<div class="a t" style="left:366.20px;width:40px;text-align:right;top:220.67px;font-size:7.4px;color:#1A1A1A;">27.4</div>
<div class="a t" style="left:386.70px;width:40px;text-align:right;top:220.67px;font-size:7.4px;color:#1A1A1A;">5</div>
<div class="a t" style="left:414.40px;width:40px;text-align:right;top:220.67px;font-size:7.4px;color:#F0203A;">15.5</div>
<div class="a t" style="left:441.30px;width:40px;text-align:right;top:220.67px;font-size:7.4px;color:#F0203A;">40.1</div>
<div class="a t" style="left:472.80px;width:40px;text-align:right;top:220.67px;font-size:7.4px;color:#1A1A1A;">1756</div>
<div class="a t" style="left:516.40px;top:220.74px;font-size:7.25px;color:#1A1A1A;">s</div>
<div class="a" style="left:251.70px;top:239.24px;width:448.30px;height:0.80px;background:#F1EFE7"></div>
<div class="a t" style="left:227.20px;width:40px;text-align:right;top:231.34px;font-size:7.4px;color:#1A1A1A;">31</div>
<div class="a t" style="left:248.70px;width:40px;text-align:right;top:231.34px;font-size:7.4px;color:#F08A2A;">Q</div>
<div class="a t" style="left:276.00px;width:40px;text-align:right;top:231.34px;font-size:7.4px;color:#1A1A1A;">27.4</div>
<div class="a t" style="left:303.50px;width:40px;text-align:right;top:231.34px;font-size:7.4px;color:#1A1A1A;transform:scaleX(0.87);transform-origin:100% 50%;">HOSE</div>
<div class="a t" style="left:335.60px;width:40px;text-align:right;top:231.34px;font-size:7.4px;color:#1A1A1A;">29.1</div>
<div class="a t" style="left:366.20px;width:40px;text-align:right;top:231.34px;font-size:7.4px;color:#1A1A1A;">27.4</div>
<div class="a t" style="left:386.70px;width:40px;text-align:right;top:231.34px;font-size:7.4px;color:#1A1A1A;">5</div>
<div class="a t" style="left:414.40px;width:40px;text-align:right;top:231.34px;font-size:7.4px;color:#F0203A;">15.5</div>
<div class="a t" style="left:441.30px;width:40px;text-align:right;top:231.34px;font-size:7.4px;color:#F0203A;">40.1</div>
<div class="a t" style="left:472.80px;width:40px;text-align:right;top:231.34px;font-size:7.4px;color:#1A1A1A;">1756</div>
<div class="a t" style="left:516.40px;top:231.41px;font-size:7.25px;color:#1A1A1A;">s</div>
<div class="a" style="left:251.70px;top:249.90px;width:448.30px;height:0.80px;background:#F1EFE7"></div>
<div class="a t" style="left:227.20px;width:40px;text-align:right;top:242.00px;font-size:7.4px;color:#1A1A1A;">33</div>
<div class="a t" style="left:248.70px;width:40px;text-align:right;top:242.00px;font-size:7.4px;color:#F08A2A;">Q</div>
<div class="a t" style="left:276.00px;width:40px;text-align:right;top:242.00px;font-size:7.4px;color:#1A1A1A;">26.3</div>
<div class="a t" style="left:303.50px;width:40px;text-align:right;top:242.00px;font-size:7.4px;color:#1A1A1A;transform:scaleX(0.87);transform-origin:100% 50%;">HOSE</div>
<div class="a t" style="left:335.60px;width:40px;text-align:right;top:242.00px;font-size:7.4px;color:#F0203A;">17.7</div>
<div class="a t" style="left:366.20px;width:40px;text-align:right;top:242.00px;font-size:7.4px;color:#F0203A;">26.3</div>
<div class="a t" style="left:386.70px;width:40px;text-align:right;top:242.00px;font-size:7.4px;color:#1A1A1A;">5</div>
<div class="a t" style="left:414.40px;width:40px;text-align:right;top:242.00px;font-size:7.4px;color:#F0203A;">19.2</div>
<div class="a t" style="left:441.30px;width:40px;text-align:right;top:242.00px;font-size:7.4px;color:#F0203A;">33.4</div>
<div class="a t" style="left:472.80px;width:40px;text-align:right;top:242.00px;font-size:7.4px;color:#F0203A;">2</div>
<div class="a t" style="left:516.40px;top:242.08px;font-size:7.25px;color:#1A1A1A;">s</div>
<div class="a" style="left:268.70px;top:90.70px;width:0.80px;height:160.00px;background:#F1EFE7"></div>
<div class="a" style="left:290.20px;top:90.70px;width:0.80px;height:160.00px;background:#F1EFE7"></div>
<div class="a" style="left:317.50px;top:90.70px;width:0.80px;height:160.00px;background:#F1EFE7"></div>
<div class="a" style="left:343.50px;top:90.70px;width:0.80px;height:160.00px;background:#F1EFE7"></div>
<div class="a" style="left:376.20px;top:90.70px;width:0.80px;height:160.00px;background:#F1EFE7"></div>
<div class="a" style="left:406.70px;top:90.70px;width:0.80px;height:160.00px;background:#F1EFE7"></div>
<div class="a" style="left:428.20px;top:90.70px;width:0.80px;height:160.00px;background:#F1EFE7"></div>
<div class="a" style="left:455.90px;top:90.70px;width:0.80px;height:160.00px;background:#F1EFE7"></div>
<div class="a" style="left:482.80px;top:90.70px;width:0.80px;height:160.00px;background:#F1EFE7"></div>
<div class="a" style="left:513.30px;top:90.70px;width:0.80px;height:160.00px;background:#F1EFE7"></div>
<div class="a" style="left:251.70px;top:250.80px;width:448.30px;height:6.80px;background:#7C7C7C;border-top:1px solid #3A3A3A"></div>
<div class="a" style="left:5.00px;top:261.30px;width:695.00px;height:218.60px;background:#fff;border-left:1px solid #8E8C80;border-top:1px solid #8E8C80"></div>
<div class="a" style="left:2.80px;top:479.90px;width:697.20px;height:4.30px;background:linear-gradient(to bottom,#F8F8F0,#F4ECE0 2.5px,#FAF0DC 4.3px)"></div>
<div class="a" style="left:0.00px;top:484.20px;width:700.00px;height:2.80px;background:linear-gradient(to bottom,#0A44E0 0,#0A3CD8 1.2px,#00229C 2.2px,#001888 2.8px)"></div>
<div class="a t" style="left:10.00px;top:266.65px;font-size:7.15px;color:#000;">13C Best&nbsp; 'Stereo Off', Records=327130 of 345252</div>
<svg width="683" height="487" viewBox="0 0 683 487" style="left:0;top:0">
<path d="M18.3 467.4 H683" stroke="#202020" stroke-width="0.9"/>
<path d="M18.30 467.4 v1.9 M29.64 467.4 v1.9 M40.99 467.4 v1.9 M52.33 467.4 v1.9 M63.68 467.4 v1.9 M75.02 467.4 v1.9 M86.36 467.4 v1.9 M97.71 467.4 v1.9 M109.05 467.4 v1.9 M120.40 467.4 v1.9 M131.74 467.4 v1.9 M143.08 467.4 v1.9 M154.43 467.4 v1.9 M165.77 467.4 v1.9 M177.12 467.4 v1.9 M188.46 467.4 v1.9 M199.80 467.4 v1.9 M211.15 467.4 v1.9 M222.49 467.4 v1.9 M233.84 467.4 v1.9 M245.18 467.4 v1.9 M256.52 467.4 v1.9 M267.87 467.4 v1.9 M279.21 467.4 v1.9 M290.56 467.4 v1.9 M301.90 467.4 v1.9 M313.24 467.4 v1.9 M324.59 467.4 v1.9 M335.93 467.4 v1.9 M347.28 467.4 v1.9 M358.62 467.4 v1.9 M369.96 467.4 v1.9 M381.31 467.4 v1.9 M392.65 467.4 v1.9 M404.00 467.4 v1.9 M415.34 467.4 v1.9 M426.68 467.4 v1.9 M438.03 467.4 v1.9 M449.37 467.4 v1.9 M460.72 467.4 v1.9 M472.06 467.4 v1.9 M483.40 467.4 v1.9 M494.75 467.4 v1.9 M506.09 467.4 v1.9 M517.44 467.4 v1.9 M528.78 467.4 v1.9 M540.12 467.4 v1.9 M551.47 467.4 v1.9 M562.81 467.4 v1.9 M574.16 467.4 v1.9 M585.50 467.4 v1.9 M596.84 467.4 v1.9 M608.19 467.4 v1.9 M619.53 467.4 v1.9 M630.88 467.4 v1.9 M642.22 467.4 v1.9 M653.56 467.4 v1.9 M664.91 467.4 v1.9 M676.25 467.4 v1.9 M687.60 467.4 v1.9 " stroke="#202020" stroke-width="0.8"/>
<text x="131.74" y="474.4" font-size="7.6" fill="#202020" stroke="#202020" stroke-width="0.12" font-family="Liberation Sans">60</text>
<text x="245.18" y="474.4" font-size="7.6" fill="#202020" stroke="#202020" stroke-width="0.12" font-family="Liberation Sans">50</text>
<text x="358.62" y="474.4" font-size="7.6" fill="#202020" stroke="#202020" stroke-width="0.12" font-family="Liberation Sans">40</text>
<text x="472.06" y="474.4" font-size="7.6" fill="#202020" stroke="#202020" stroke-width="0.12" font-family="Liberation Sans">30</text>
<text x="585.50" y="474.4" font-size="7.6" fill="#202020" stroke="#202020" stroke-width="0.12" font-family="Liberation Sans">20</text>
<path d="M175.1 314.0 V467.4" stroke="#3434E4" stroke-width="1.15"/>
<path d="M236.0 314.0 V467.4" stroke="#3434E4" stroke-width="1.15"/>
<path d="M336.2 314.0 V467.4" stroke="#4EA89E" stroke-width="1.15"/>
<path d="M354.9 314.0 V467.4" stroke="#4EA89E" stroke-width="1.15"/>
<path d="M367.0 314.0 V467.4" stroke="#3434E4" stroke-width="1.15"/>
<path d="M383.6 314.0 V467.4" stroke="#3434E4" stroke-width="1.15"/>
<path d="M404.4 314.0 V467.4" stroke="#4EA89E" stroke-width="1.15"/>
<path d="M424.3 314.0 V467.4" stroke="#4EA89E" stroke-width="1.15"/>
<path d="M436.6 314.0 V467.4" stroke="#4EA89E" stroke-width="1.15"/>
<path d="M459.5 314.0 V467.4" stroke="#F09A40" stroke-width="1.15"/>
<path d="M470.8 314.0 V467.4" stroke="#4EA89E" stroke-width="1.15"/>
<path d="M484.2 314.0 V467.4" stroke="#4EA89E" stroke-width="1.15"/>
<path d="M501.2 314.0 V467.4" stroke="#EE3C3C" stroke-width="1.15"/>
<path d="M514.4 314.0 V467.4" stroke="#F09A40" stroke-width="1.15"/>
<path d="M517.5 314.0 V467.4" stroke="#4EA89E" stroke-width="1.15"/>
<path d="M537.6 314.0 V467.4" stroke="#F09A40" stroke-width="1.15"/>
<path d="M558.6 314.0 V467.4" stroke="#4EA89E" stroke-width="1.15"/>
<path d="M600.0 314.0 V467.4" stroke="#4EA89E" stroke-width="1.15"/>
<path d="M601.0 314.0 V467.4" stroke="#4EA89E" stroke-width="1.15"/>
<path d="M628.4 314.0 V467.4" stroke="#F09A40" stroke-width="1.15"/>
<path d="M346.2 375.0 V467.4" stroke="#CC40AE" stroke-width="1.15"/>
<path d="M371.5 375.0 V467.4" stroke="#CC40AE" stroke-width="1.15"/>
<path d="M387.5 375.0 V467.4" stroke="#CC40AE" stroke-width="1.15"/>
<path d="M434.8 375.0 V467.4" stroke="#CC40AE" stroke-width="1.15"/>
<path d="M444.2 375.0 V467.4" stroke="#CC40AE" stroke-width="1.15"/>
<path d="M478.6 375.0 V467.4" stroke="#CC40AE" stroke-width="1.15"/>
<path d="M357.3 298.3 H637 M357.3 295.2 V301.4 M637 295.2 V301.4" stroke="#EE3C3C" stroke-width="0.9"/>
<text x="501.2" y="297.3" font-size="7.3" fill="#202020" stroke="#202020" stroke-width="0.15" font-family="Liberation Sans">27.4</text>
</svg>
</body></html>
